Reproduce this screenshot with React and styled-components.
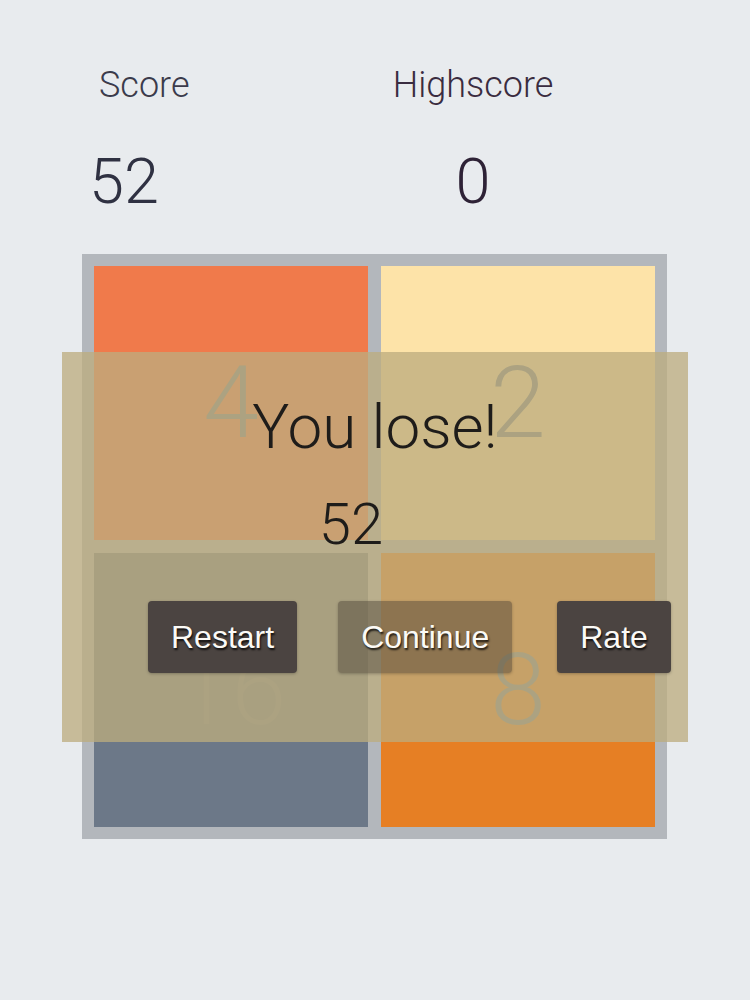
import React from "react";
import styled, { createGlobalStyle } from "styled-components";

const Global = createGlobalStyle`
  html, body { margin: 0; padding: 0; background: #e8ebee; }
  body { font-family: "Roboto", "Liberation Sans", sans-serif; }
`;

const Page = styled.div`
  width: 750px;
  height: 1000px;
  background: #e8ebee;
  overflow: hidden;
`;

const Header = styled.div`
  display: flex;
  padding-top: 67px;
  height: 254px;
  box-sizing: border-box;
`;

const StatColumn = styled.div`
  display: flex;
  flex-direction: column;
  align-items: ${(p) => (p.$center ? "center" : "flex-start")};
  width: ${(p) => p.$width}px;
  padding-left: ${(p) => p.$left || 0}px;
  box-sizing: border-box;
`;

const StatLabel = styled.div`
  font-size: 36px;
  line-height: 1;
  font-weight: 300;
  color: ${(p) => p.$color};
  margin-left: ${(p) => p.$indent || 0}px;
`;

const StatValue = styled.div`
  font-size: 63px;
  line-height: 1;
  font-weight: 300;
  margin-top: 47px;
  color: ${(p) => p.$color};
`;

const BoardWrap = styled.div`
  position: relative;
  margin-left: 82px;
  width: 585px;
`;

const Board = styled.div`
  display: grid;
  grid-template-columns: 274px 274px;
  grid-template-rows: 274px 274px;
  gap: 13px;
  padding: 12px;
  background: #b3b7bc;
`;

const Tile = styled.div`
  background: ${(p) => p.$bg};
  display: flex;
  align-items: center;
  justify-content: center;
  font-size: 100px;
  line-height: 1;
  font-weight: 300;
  color: #78818a;
`;

const Overlay = styled.div`
  position: absolute;
  left: -20px;
  top: 98px;
  width: 626px;
  height: 390px;
  background: rgba(188, 172, 126, 0.76);
  display: flex;
  flex-direction: column;
  align-items: center;
  padding-top: 44px;
  box-sizing: border-box;
`;

const Title = styled.div`
  font-size: 62px;
  line-height: 1;
  font-weight: 300;
  color: #1e1c1a;
`;

const FinalScore = styled.div`
  font-size: 58px;
  line-height: 1;
  font-weight: 300;
  color: #1e1c1a;
  margin-top: 37px;
  margin-right: 48px;
`;

const Buttons = styled.div`
  display: flex;
  align-self: stretch;
  padding-left: 86px;
  gap: 41px;
  margin-top: 48px;
`;

const Button = styled.button`
  height: 72px;
  padding: 0 23px;
  border: none;
  border-radius: 4px;
  background: ${(p) => (p.$faded ? "rgba(72, 62, 52, 0.45)" : "#4b4441")};
  box-shadow: 0 1px 3px rgba(0, 0, 0, 0.25);
  font-family: "Liberation Sans", Arial, sans-serif;
  font-size: 32px;
  color: #fbfaf6;
  text-shadow: 1px 2px 2px rgba(0, 0, 0, 0.8);
  cursor: pointer;
  margin-left: ${(p) => p.$extra || 0}px;
`;

export default function App() {
  const tiles = [
    { v: 4, bg: "#f07a4b" },
    { v: 2, bg: "#fde3a8" },
    { v: 16, bg: "#6c7888" },
    { v: 8, bg: "#e67f24" },
  ];
  return (
    <Page>
      <Global />
      <Header>
        <StatColumn $width={393} $left={89}>
          <StatLabel $indent={10} $color="#3b3b4b">Score</StatLabel>
          <StatValue $color="#2f3142">52</StatValue>
        </StatColumn>
        <StatColumn $width={160} $center>
          <StatLabel $color="#3a2c40">Highscore</StatLabel>
          <StatValue $color="#2e2236">0</StatValue>
        </StatColumn>
      </Header>
      <BoardWrap>
        <Board>
          {tiles.map((t, i) => (
            <Tile key={i} $bg={t.bg}>
              {t.v}
            </Tile>
          ))}
        </Board>
        <Overlay>
          <Title>You lose!</Title>
          <FinalScore>52</FinalScore>
          <Buttons>
            <Button>Restart</Button>
            <Button $faded>Continue</Button>
            <Button $extra={4}>Rate</Button>
          </Buttons>
        </Overlay>
      </BoardWrap>
    </Page>
  );
}
